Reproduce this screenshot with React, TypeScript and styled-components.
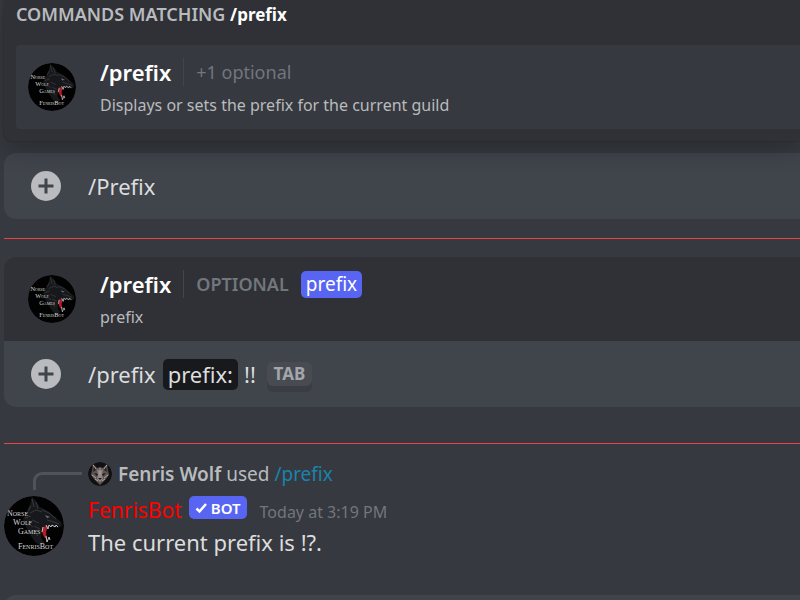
import React from "react";
import styled, { createGlobalStyle } from "styled-components";

const Global = createGlobalStyle`
  *, *::before, *::after { box-sizing: border-box; }
  html, body { margin: 0; background: #36393f; }
  body {
    overflow: hidden;
    font-family: "Noto Sans", "Open Sans", sans-serif;
    color: #dcddde;
  }
  h2, h3, p { margin: 0; font-weight: 400; }
`;

const Page = styled.main`
  height: 100vh;
  overflow: hidden;
  padding-left: 4px;
  display: flex;
  flex-direction: column;
  background: #36393f;
`;

const Popup = styled.section`
  flex: none;
  padding: 3px 0 12px 12px;
  background: #2f3136;
  border-bottom-left-radius: 8px;
  box-shadow: 0 8px 24px rgba(0, 0, 0, 0.24), 0 0 2px rgba(0, 0, 0, 0.3);
  margin-bottom: 12px;
  z-index: 1;
`;

const PopupTitle = styled.h2`
  font-size: 18px;
  line-height: 22px;
  font-weight: 600;
  color: #b9bbbe;
  margin-bottom: 19px;

  strong { color: #fff; font-size: 17px; font-weight: 700; }
`;

const Command = styled.div<{ $selected?: boolean }>`
  flex: none;
  display: flex;
  align-items: center;
  gap: 24px;
  height: 84px;
  padding-left: ${(p) => (p.$selected ? 12 : 24)}px;
  background: ${(p) => (p.$selected ? "#36393f" : "#2f3136")};
  border-radius: ${(p) => (p.$selected ? "4px 0 0 4px" : "12px 0 0 0")};
`;

const CommandText = styled.div`
  display: flex;
  flex-direction: column;
  gap: 8px;
`;

const CommandHead = styled.div`
  display: flex;
  align-items: center;
  height: 28px;
`;

const CommandName = styled.h3`
  font-size: 22px;
  line-height: 28px;
  font-weight: 600;
  color: #fff;
  padding-right: 12px;
  border-right: 1px solid #42454b;
  margin-right: 12px;
`;

const Hint = styled.span`
  font-size: 18px;
  line-height: 28px;
  color: #72767d;
  margin-right: 12px;
`;

const OptionalLabel = styled(Hint)`
  font-weight: 600;
`;

const OptionChip = styled.span`
  padding: 0 5px;
  border-radius: 5px;
  background: #5865f2;
  color: #fff;
  font-size: 19px;
  line-height: 27px;
`;

const Description = styled.p<{ $strong?: boolean }>`
  font-size: 16px;
  line-height: 22px;
  font-weight: ${(p) => (p.$strong ? 450 : 400)};
  color: #b9bbbe;
`;

const Composer = styled.div<{ $joined?: boolean }>`
  flex: none;
  display: flex;
  align-items: center;
  height: 66px;
  padding-left: 27px;
  background: #40444b;
  border-radius: ${(p) => (p.$joined ? "0 0 0 12px" : "12px 0 0 12px")};
`;

const AddButton = styled.button`
  flex: none;
  width: 30px;
  height: 30px;
  padding: 0;
  border: 0;
  background: none;
  margin-right: 27px;

  svg { display: block; }
`;

const Field = styled.input<{ $chars?: number }>`
  flex: ${(p) => (p.$chars ? "none" : 1)};
  width: ${(p) => (p.$chars ? p.$chars + "ch" : "auto")};
  min-width: 0;
  padding: 0;
  border: 0;
  outline: 0;
  background: none;
  color: #dcddde;
  font: inherit;
  font-size: 22px;
  line-height: 32px;
`;

const Typed = styled.span`
  font-size: 22px;
  line-height: 32px;
  margin-right: 7px;
`;

const ParamLabel = styled.label`
  padding: 0 5px;
  margin-right: 6px;
  border-radius: 5px;
  background: #18191c;
  font-size: 22px;
  line-height: 31px;
`;

const Key = styled.kbd`
  padding: 0 7px;
  margin-left: 10px;
  border-radius: 6px;
  background: #484b52;
  box-shadow: 0 6px 0 #3a3d43;
  color: #a3a6aa;
  font-family: inherit;
  font-size: 17px;
  font-weight: 700;
  line-height: 24px;
`;

const Divider = styled.hr<{ $above: number; $below: number }>`
  flex: none;
  width: 100%;
  height: 1px;
  margin: ${(p) => p.$above}px 0 ${(p) => p.$below}px;
  border: 0;
  background: #ed4245;
`;

const Message = styled.article`
  flex: none;
  display: grid;
  grid-template-columns: 60px 1fr;
  column-gap: 24px;
  margin-bottom: 36px;
`;

const Spine = styled.div`
  width: 49px;
  height: 18px;
  margin: 12px 0 0 29px;
  border-left: 3px solid #4f545c;
  border-top: 3px solid #4f545c;
  border-top-left-radius: 9px;
`;

const Reply = styled.div`
  display: flex;
  align-items: center;
  gap: 6px;
  height: 28px;
  font-size: 19px;
  line-height: 28px;
  color: #b9bbbe;

  strong { font-weight: 600; }
  a { color: #1a83ad; text-decoration: none; }
`;

const MessageBody = styled.div`
  padding-top: 4px;
`;

const AvatarCell = styled.div`
  padding-top: 6px;
`;

const Byline = styled.header`
  display: flex;
  height: 32px;
`;

const Author = styled.h3`
  font-size: 21px;
  line-height: 32px;
  color: #f00;
  margin-right: 7px;
`;

const BotTag = styled.span`
  display: flex;
  align-items: center;
  gap: 3px;
  height: 23px;
  padding: 0 6px;
  margin: 2px 13px 0 0;
  border-radius: 5px;
  background: #5865f2;
  color: #fff;
  font-size: 15px;
  font-weight: 600;
`;

const Time = styled.time`
  align-self: flex-end;
  font-size: 16px;
  line-height: 28px;
  color: #72767d;
`;

const Content = styled.p`
  font-size: 22px;
  line-height: 33px;
`;

const Round = styled.svg`
  flex: none;
  display: block;
  border-radius: 50%;
`;

const Lettering = styled.g`
  font-family: "Liberation Serif", serif;
  font-size: 8px;
  font-variant: small-caps;
  fill: #d4d4d4;
`;

const Logo = ({ size }: { size: number }) => (
  <Round width={size} height={size} viewBox="0 0 60 60" role="img" aria-label="FenrisBot avatar">
    <circle cx="30" cy="30" r="30" fill="#020203" />
    <path
      d="M23 15 L26 8 L28 1 L32 5 L36 11 L44 15 L50 20 L57 26 L58 30 L54 32 L47 30 L42 32 L38 35 L37 42 L40 46 L37 50 L31 46 L27 40 L22 31 L19 23 Z"
      fill="#17181b"
    />
    <path
      d="M28 3 L30 11 M32 6 L34 13 M24 15 L27 10 M26 17 L32 14 L38 16 M38 14 L45 17 L52 23 M21 22 L27 20 M28 24 L35 27 M30 30 L36 33 M24 27 L29 31 M43 24 L50 26 L55 28 M31 36 L34 40"
      stroke="#36383d"
      strokeWidth="1"
      fill="none"
    />
    <path d="M41 19 L46 21 L43 22 Z" fill="#66757b" />
    <path d="M39 31 L44 30 L42 36 L43 43 L40 41 L38 36 Z" fill="#b01c28" />
    <path
      d="M42 29 L44 33 L45 29 L47 31 L48 29 L51 31 L52 29 L54 31 M39 31 L38 36 M42 40 L43 46 L45 41 L46 44"
      stroke="#c4c4c4"
      strokeWidth="1"
      fill="none"
    />
    <Lettering>
      <text x="3" y="20">Norse</text>
      <text x="9" y="29">Wolf</text>
      <text x="14" y="38">Games</text>
      <text x="14" y="53">FenrisBot</text>
    </Lettering>
  </Round>
);

const WolfFace = () => (
  <Round width="24" height="24" viewBox="0 0 24 24" role="img" aria-label="Fenris Wolf avatar">
    <circle cx="12" cy="12" r="12" fill="#121011" />
    <path d="M5 2 L9 6 L12 5 L15 6 L19 2 L20 9 L21 13 L18 17 L15 20 L12 23 L9 20 L6 17 L3 13 L4 9 Z" fill="#5d5454" />
    <path d="M6 4 L8 8 L5 10 Z M18 4 L16 8 L19 10 Z" fill="#241f20" />
    <path d="M9 7 L12 9 L15 7 L14 13 L15 17 L12 20 L9 17 L10 13 Z" fill="#8f8584" />
    <path d="M6 11 L10 12 L9 14 Z M18 11 L14 12 L15 14 Z M10 16 L14 16 L12 18 Z" fill="#1c1819" />
    <path
      d="M4 13 L8 16 M20 13 L16 16 M12 6 L12 13 M5 3 L8 7 M19 3 L16 7 M7 17 L10 19 M17 17 L14 19"
      stroke="#aaa09e"
      strokeWidth="1"
    />
  </Round>
);

const Add = () => (
  <AddButton type="button" aria-label="Add attachment">
    <svg width="30" height="30" viewBox="0 0 30 30">
      <circle cx="15" cy="15" r="15" fill="#b9bbbe" />
      <path d="M15 7.5v15M7.5 15h15" stroke="#40444b" strokeWidth="3" />
    </svg>
  </AddButton>
);

export default function App() {
  return (
    <>
      <Global />
      <Page>
        <Popup>
          <PopupTitle>
            COMMANDS MATCHING <strong>/prefix</strong>
          </PopupTitle>
          <Command $selected>
            <Logo size={48} />
            <CommandText>
              <CommandHead>
                <CommandName>/prefix</CommandName>
                <Hint>+1 optional</Hint>
              </CommandHead>
              <Description $strong>Displays or sets the prefix for the current guild</Description>
            </CommandText>
          </Command>
        </Popup>
        <Composer>
          <Add />
          <Field aria-label="Message" defaultValue="/Prefix" />
        </Composer>
        <Divider $above={19} $below={18} />
        <Command>
          <Logo size={48} />
          <CommandText>
            <CommandHead>
              <CommandName>/prefix</CommandName>
              <OptionalLabel>OPTIONAL</OptionalLabel>
              <OptionChip>prefix</OptionChip>
            </CommandHead>
            <Description>prefix</Description>
          </CommandText>
        </Command>
        <Composer $joined>
          <Add />
          <Typed>/prefix</Typed>
          <ParamLabel htmlFor="prefix-value">prefix:</ParamLabel>
          <Field id="prefix-value" $chars={1} defaultValue="!!" />
          <Key>TAB</Key>
        </Composer>
        <Divider $above={36} $below={16} />
        <Message>
          <Spine />
          <Reply>
            <WolfFace />
            <span>
              <strong>Fenris Wolf</strong> used <a href="#prefix">/prefix</a>
            </span>
          </Reply>
          <AvatarCell>
            <Logo size={60} />
          </AvatarCell>
          <MessageBody>
            <Byline>
              <Author>FenrisBot</Author>
              <BotTag>
                <svg width="13" height="12" viewBox="0 0 13 12">
                  <path d="M1.5 6.5l3 3L11 2" stroke="#fff" strokeWidth="2.5" fill="none" />
                </svg>
                BOT
              </BotTag>
              <Time>Today at 3:19 PM</Time>
            </Byline>
            <Content>The current prefix is !?.</Content>
          </MessageBody>
        </Message>
        <Composer />
      </Page>
    </>
  );
}
